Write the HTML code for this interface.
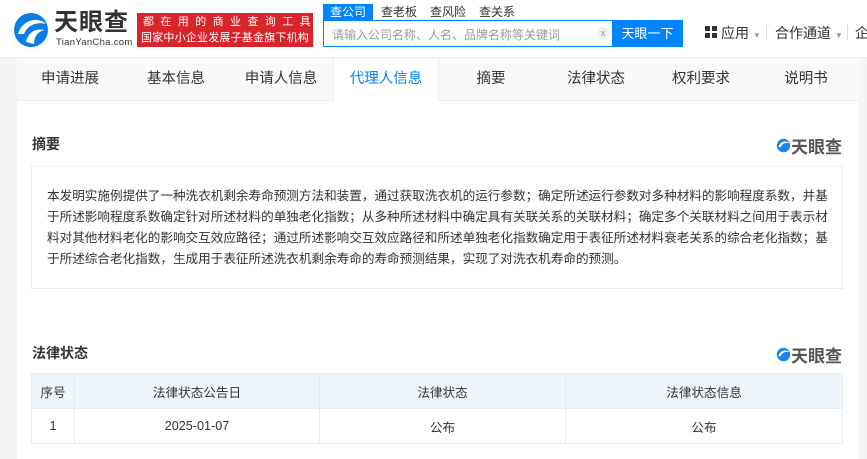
<!DOCTYPE html>
<html><head><meta charset="utf-8"><style>
*{margin:0;padding:0;box-sizing:border-box}
body{width:867px;height:459px;overflow:hidden;background:#f5f5f5;font-family:"Liberation Sans","Noto Sans CJK SC",sans-serif;color:#333;position:relative}
.hdr{position:absolute;left:0;top:0;width:867px;height:58px;background:#fff;border-bottom:1px solid #eee}
.abs{position:absolute}
.card{position:absolute;left:17px;top:59px;width:842px;height:400px;background:#fff}
.tabs{position:absolute;left:0;top:0;width:842px;height:42px;background:#f9f9f9;border-bottom:1px solid #eee}
.tab{position:absolute;top:0;height:42px;width:106px;line-height:40px;text-align:center;font-size:14.5px;color:#333}
.tab.act{background:#fff;color:#0084ff;border-left:1px solid #eee;border-right:1px solid #eee;height:43px}
.ttl{position:absolute;font-size:14px;font-weight:bold;color:#333}
.lg{position:absolute;font-size:17px;color:#555;font-weight:bold;display:flex;align-items:center}
.box{position:absolute;left:14px;top:107px;width:812px;height:123px;border:1px solid #e4ecf5;padding:19px 8px 0 15px;font-size:12.6px;line-height:21px;color:#333}
table{position:absolute;left:14px;top:314px;width:812px;border-collapse:collapse;font-size:12.6px}
td{border:1px solid #e4ecf5;text-align:center;height:35px}
tr.h td{background:#eef5fd}
</style></head><body>
<div class="hdr">
<svg class="abs" style="left:12px;top:12px" width="38" height="36" viewBox="0 0 38 36"><circle cx="19" cy="18" r="17" fill="#0a7ee8"/><path d="M6 22 C10 8 26 4 34 12 C26 10 16 12 12 22 Z" fill="#fff"/><path d="M14 30 C16 20 24 16 32 18 C26 20 22 24 22 32 Z" fill="#fff"/></svg>
<div class="abs" style="left:54px;top:10px;font-size:24px;font-weight:bold;color:#333;letter-spacing:1px;line-height:26px">天眼查</div>
<div class="abs" style="left:56px;top:37px;font-size:9.5px;color:#333;letter-spacing:0.3px">TianYanCha.com</div>
<div class="abs" style="left:137px;top:13px;width:176px;height:34px;background:#d8252b;color:#fff;font-size:11px;line-height:16px;text-align:center;padding-top:1px;white-space:nowrap;overflow:hidden"><div style="letter-spacing:6.4px;padding-left:6px">都在用的商业查询工具</div><div style="letter-spacing:0.2px">国家中小企业发展子基金旗下机构</div></div>
<div class="abs" style="left:323px;top:4px;width:50px;height:16px;background:#0084ff;color:#fff;font-size:12px;line-height:16px;text-align:center">查公司</div>
<div class="abs" style="left:381px;top:4px;font-size:12px;color:#333;line-height:16px">查老板</div>
<div class="abs" style="left:430px;top:4px;font-size:12px;color:#333;line-height:16px">查风险</div>
<div class="abs" style="left:479px;top:4px;font-size:12px;color:#333;line-height:16px">查关系</div>
<div class="abs" style="left:323px;top:20px;width:360px;height:27px;border:1px solid #0084ff;background:#fff"></div>
<div class="abs" style="left:332px;top:26px;font-size:12px;color:#999">请输入公司名称、人名、品牌名称等关键词</div>
<div class="abs" style="left:597px;top:27px;width:12px;height:12px;border-radius:6px;background:#f0f0f0;font-size:9px;color:#999;text-align:center;line-height:12px">x</div>
<div class="abs" style="left:612px;top:20px;width:71px;height:27px;background:#0084ff;color:#fff;font-size:13px;line-height:27px;text-align:center">天眼一下</div>
<div class="abs" style="left:705px;top:26px;width:12px;height:12px;display:grid;grid-template-columns:5px 5px;gap:2px"><i style="background:#333"></i><i style="background:#333"></i><i style="background:#333"></i><i style="background:#333"></i></div>
<div class="abs" style="left:721px;top:23px;font-size:14px;color:#333">应用 <span style="font-size:8px;color:#999">▼</span></div>
<div class="abs" style="left:766px;top:24px;width:1px;height:16px;background:#ddd"></div>
<div class="abs" style="left:775px;top:23px;font-size:14px;color:#333">合作通道 <span style="font-size:8px;color:#999">▼</span></div>
<div class="abs" style="left:847px;top:24px;width:1px;height:16px;background:#ddd"></div>
<div class="abs" style="left:855px;top:23px;font-size:14px;color:#333">企</div>
</div>
<div class="abs" style="left:859px;top:59px;width:8px;height:400px;background:#f5f5f5"></div>
<div class="card">
<div class="tabs">
<div class="tab" style="left:0">申请进展</div>
<div class="tab" style="left:106px">基本信息</div>
<div class="tab" style="left:211px">申请人信息</div>
<div class="tab act" style="left:316px">代理人信息</div>
<div class="tab" style="left:421px">摘要</div>
<div class="tab" style="left:526px">法律状态</div>
<div class="tab" style="left:631px">权利要求</div>
<div class="tab" style="left:736px">说明书</div>
</div>
<div class="ttl" style="left:15px;top:75px">摘要</div>
<div class="lg" style="left:759px;top:74px"><svg width="15" height="15" viewBox="0 0 38 36"><circle cx="19" cy="18" r="17" fill="#1a86e8"/><path d="M6 22 C10 8 26 4 34 12 C26 10 16 12 12 22 Z" fill="#fff"/></svg>天眼查</div>
<div class="box">本发明实施例提供了一种洗衣机剩余寿命预测方法和装置，通过获取洗衣机的运行参数；确定所述运行参数对多种材料的影响程度系数，并基于所述影响程度系数确定针对所述材料的单独老化指数；从多种所述材料中确定具有关联关系的关联材料；确定多个关联材料之间用于表示材料对其他材料老化的影响交互效应路径；通过所述影响交互效应路径和所述单独老化指数确定用于表征所述材料衰老关系的综合老化指数；基于所述综合老化指数，生成用于表征所述洗衣机剩余寿命的寿命预测结果，实现了对洗衣机寿命的预测。</div>
<div class="ttl" style="left:15px;top:284px">法律状态</div>
<div class="lg" style="left:759px;top:283px"><svg width="15" height="15" viewBox="0 0 38 36"><circle cx="19" cy="18" r="17" fill="#1a86e8"/><path d="M6 22 C10 8 26 4 34 12 C26 10 16 12 12 22 Z" fill="#fff"/></svg>天眼查</div>
<table>
<tr class="h"><td style="width:43px">序号</td><td style="width:245px">法律状态公告日</td><td style="width:246px">法律状态</td><td>法律状态信息</td></tr>
<tr><td>1</td><td>2025-01-07</td><td>公布</td><td>公布</td></tr>
</table>
</div>
</body></html>
